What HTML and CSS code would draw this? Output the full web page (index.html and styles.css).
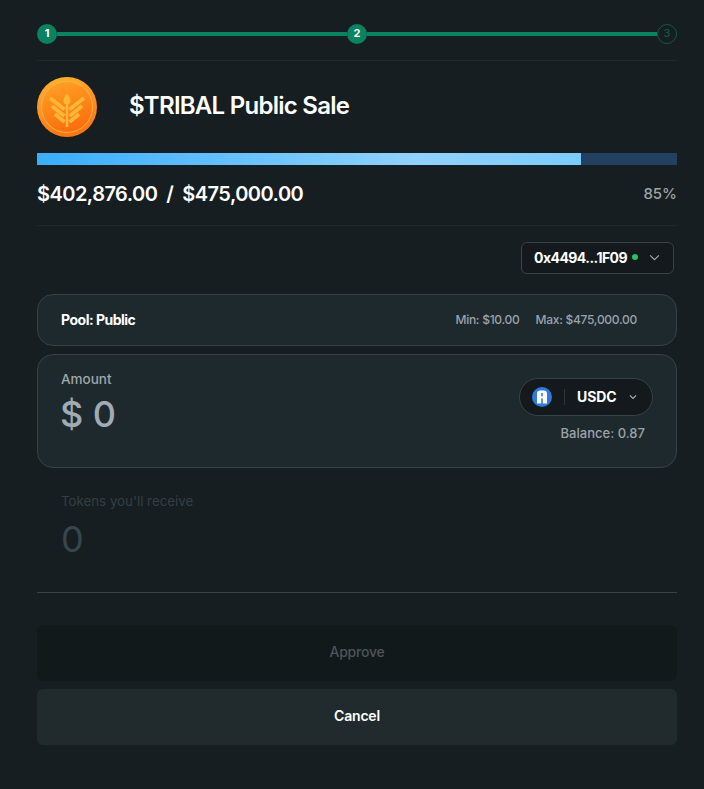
FILE: index.html
```html
<!DOCTYPE html>
<html lang="en">
<head>
<meta charset="utf-8">
<title>$TRIBAL Public Sale</title>
<link rel="stylesheet" href="styles.css">
</head>
<body>
<main class="page">
  <div class="stepper">
    <span class="step done">1</span>
    <span class="track"></span>
    <span class="step done">2</span>
    <span class="track"></span>
    <span class="step todo">3</span>
  </div>

  <div class="head">
    <svg class="coin" viewBox="0 0 60 60" aria-hidden="true">
      <defs>
        <linearGradient id="coinFill" x1="0.3" y1="0" x2="0.6" y2="1">
          <stop offset="0" stop-color="#ffb02e"/>
          <stop offset="1" stop-color="#fb7414"/>
        </linearGradient>
        <linearGradient id="coinInner" x1="0.3" y1="0" x2="0.6" y2="1">
          <stop offset="0" stop-color="#ffa024"/>
          <stop offset="1" stop-color="#fb6c0e"/>
        </linearGradient>
      </defs>
      <circle cx="30" cy="30" r="30" fill="url(#coinFill)"/>
      <circle cx="30" cy="30" r="25.5" fill="url(#coinInner)" stroke="#ffb445" stroke-width="0.9"/>
      <g fill="none" stroke="#ffb737" stroke-width="3.600">
        <path d="M30 26v24" stroke-width="2.600"/>
        <path d="M13 21l14.500 11.500M47 21L32.500 32.500"/>
        <path d="M15 29l12.500 10M45 29L32.500 39"/>
        <path d="M18 37l9.500 8M42 37l-9.500 8"/>
      </g>
      <path d="M30 16.500c2.400 3 3.500 5.300 3.500 7.200a3.500 3.500 0 0 1-7 0c0-1.900 1.100-4.200 3.500-7.200z" fill="#ffb737"/>
    </svg>
    <h1 class="title">$TRIBAL Public Sale</h1>
  </div>

  <div class="bar"><div class="bar-fill"></div></div>

  <div class="stats">
    <span class="raised">$402,876.00<span class="slash">/</span>$475,000.00</span>
    <span class="percent">85%</span>
  </div>

  <div class="wallet-row">
    <button class="wallet">
      <span class="address">0x4494...1F09</span>
      <span class="dot"></span>
      <svg class="wallet-chev" viewBox="0 0 12 8" aria-hidden="true"><path d="M1 1.500l5 5 5-5"/></svg>
    </button>
  </div>

  <section class="card pool">
    <span class="pool-name">Pool: Public</span>
    <span class="limits"><span>Min: $10.00</span><span>Max: $475,000.00</span></span>
  </section>

  <section class="card amount">
    <div class="amount-left">
      <div class="label">Amount</div>
      <div class="value">$ 0</div>
    </div>
    <div class="amount-right">
      <button class="token">
        <svg class="usdc" viewBox="0 0 20 20" aria-hidden="true">
          <circle cx="10" cy="10" r="10" fill="#2f7bdc"/>
          <path d="M5 16.500V6.500C5 4.500 6.500 3.500 8 3.500h4c1.500 0 3 1 3 3v10h-4.200v-5H9.200v5zM9.200 6v3.300h1.600V6z" fill="#fff" fill-rule="evenodd"/>
        </svg>
        <span class="sep"></span>
        <span class="token-name">USDC</span>
        <svg class="token-chev" viewBox="0 0 8 6" aria-hidden="true"><path d="M1 1.500l3 3 3-3"/></svg>
      </button>
      <div class="balance">Balance: 0.87</div>
    </div>
  </section>

  <section class="receive">
    <div class="receive-label">Tokens you'll receive</div>
    <div class="receive-value">0</div>
  </section>

  <div class="actions">
    <button class="btn approve">Approve</button>
    <button class="btn cancel">Cancel</button>
  </div>
</main>
</body>
</html>
```
FILE: styles.css
```css
* { box-sizing: border-box; }
html, body { margin: 0; padding: 0; }
body {
  background: #161e21;
  color: #fff;
  font-family: Inter, "Liberation Sans", sans-serif;
  height: 789px;
  overflow: hidden;
}
button { font-family: inherit; cursor: pointer; }
.page { width: 704px; padding: 24px 27px 0 37px; }

.stepper { display: flex; align-items: center; height: 20px; }
.step {
  flex: none;
  width: 20px;
  height: 20px;
  border-radius: 50%;
  display: flex;
  align-items: flex-start;
  justify-content: center;
  padding-top: 3px;
  font-size: 11px;
  line-height: 13px;
  font-weight: 700;
}
.step.done { background: #0b8260; color: #fff; }
.step.todo { border: 1px solid #0f5a47; color: #0f5a47; padding-top: 2px; font-weight: 500; }
.track { flex: 1; height: 4px; background: #0b8260; }

.head {
  margin-top: 16px;
  border-top: 1px solid #1f282b;
  padding-top: 16px;
  display: flex;
  align-items: center;
  gap: 32px;
}
.coin { width: 60px; height: 60px; flex: none; display: block; }
.title { margin: 0 0 2px; font-size: 24px; line-height: 30px; font-weight: 600; letter-spacing: -0.74px; color: #fff; }

.bar { margin-top: 16px; height: 12px; background: #22405f; }
.bar-fill {
  width: 85%;
  height: 100%;
  background: linear-gradient(90deg, #3aaefb 0%, #90d2ff 70%, #7ccbff 100%);
}

.stats {
  margin-top: 16px;
  height: 45px;
  padding-bottom: 18px;
  border-bottom: 1px solid #1f282b;
  display: flex;
  justify-content: space-between;
  align-items: center;
}
.raised { font-size: 20px; line-height: 26px; font-weight: 600; letter-spacing: -0.54px; }
.slash { margin: 0 9px; }
.percent { font-size: 15px; line-height: 26px; font-weight: 500; color: #a0a4a6; }

.wallet-row { display: flex; justify-content: flex-end; margin-top: 16px; padding-right: 3px; }
.wallet {
  width: 153px;
  height: 32px;
  padding: 0 13px 2px 12px;
  display: flex;
  align-items: center;
  background: #13191c;
  border: 1px solid #394347;
  border-radius: 6px;
  color: #fff;
}
.address { font-size: 14px; font-weight: 700; letter-spacing: -0.55px; white-space: nowrap; }
.dot { width: 6px; height: 6px; border-radius: 50%; background: #22c55e; margin-left: 5px; flex: none; }
.wallet-chev { width: 11px; height: 7px; margin-left: auto; fill: none; stroke: #a3a8aa; stroke-width: 1.3; }

.card {
  width: 640px;
  background: #1e292e;
  border: 1px solid #364247;
  border-radius: 16px;
  padding: 0 39px 0 23px;
}
.pool {
  margin-top: 20px;
  height: 52px;
  padding-bottom: 2px;
  display: flex;
  align-items: center;
  justify-content: space-between;
}
.pool-name { font-size: 14px; font-weight: 700; letter-spacing: -0.5px; }
.limits { display: flex; gap: 16px; font-size: 12px; font-weight: 500; letter-spacing: -0.27px; color: #9aa3ad; }

.amount {
  margin-top: 8px;
  height: 114px;
  padding: 16px 23px 0 23px;
  display: flex;
  justify-content: space-between;
}
.label { font-size: 13.500px; line-height: 17px; font-weight: 500; color: #a1a6a9; }
.value { font-size: 36px; line-height: 44px; margin: 4px 0 0 -1px; font-weight: 500; color: #a1abb3; }
.amount-right { display: flex; flex-direction: column; align-items: flex-end; margin-top: 7px; }
.token {
  width: 134px;
  height: 38px;
  display: flex;
  align-items: center;
  padding: 0 0 0 12px;
  background: #13191c;
  border: 1px solid #364247;
  border-radius: 19px;
  color: #fff;
}
.usdc { width: 20px; height: 20px; flex: none; }
.sep { width: 1px; height: 16px; background: #2b3437; margin-left: 12px; }
.token-name { font-size: 14px; font-weight: 700; margin: 0 0 2px 12px; letter-spacing: -0.1px; }
.token-chev { width: 8px; height: 6px; margin-left: 13px; fill: none; stroke: #a3a8aa; stroke-width: 1.2; }
.balance { font-size: 13px; line-height: 17px; font-weight: 500; letter-spacing: 0.02px; color: #9ca3a8; margin-top: 9px; padding-right: 8px; }

.receive { height: 125px; padding: 25px 24px 0; border-bottom: 1px solid #3a4245; }
.receive-label { font-size: 13.300px; line-height: 17px; font-weight: 400; color: #343f45; }
.receive-value { font-size: 36px; line-height: 44px; margin-top: 7px; color: #38464d; }

.actions { margin-top: 32px; display: flex; flex-direction: column; gap: 8px; }
.btn {
  width: 640px;
  height: 56px;
  border: 0;
  border-radius: 6px;
  padding-bottom: 4px;
  font-size: 14px;
  font-weight: 600;
  letter-spacing: -0.2px;
}
.approve { background: #11191b; color: #4d5558; font-weight: 500; }
.cancel { background: #212b2e; color: #fff; }
```
